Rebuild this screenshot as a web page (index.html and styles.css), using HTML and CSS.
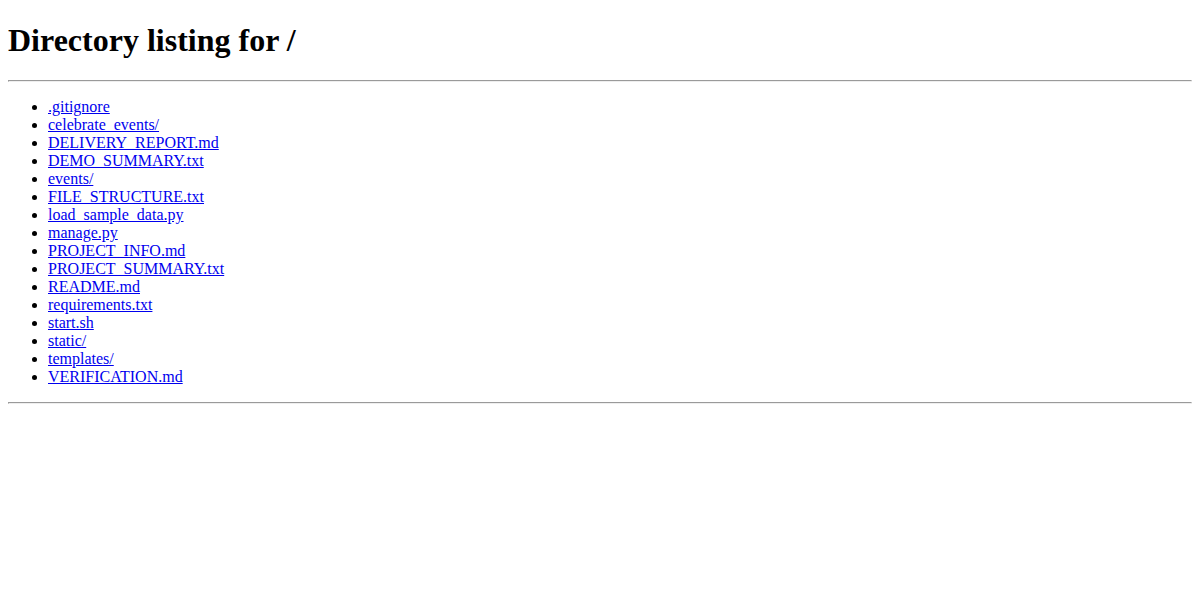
FILE: index.html
```html
<!DOCTYPE HTML>
<html lang="en">
<head>
<meta charset="utf-8">
<title>Directory listing for /</title>
<link rel="stylesheet" href="styles.css">
</head>
<body>
<h1>Directory listing for /</h1>
<hr>
<ul>
<li><a href=".gitignore">.gitignore</a></li>
<li><a href="celebrate_events/">celebrate_events/</a></li>
<li><a href="DELIVERY_REPORT.md">DELIVERY_REPORT.md</a></li>
<li><a href="DEMO_SUMMARY.txt">DEMO_SUMMARY.txt</a></li>
<li><a href="events/">events/</a></li>
<li><a href="FILE_STRUCTURE.txt">FILE_STRUCTURE.txt</a></li>
<li><a href="load_sample_data.py">load_sample_data.py</a></li>
<li><a href="manage.py">manage.py</a></li>
<li><a href="PROJECT_INFO.md">PROJECT_INFO.md</a></li>
<li><a href="PROJECT_SUMMARY.txt">PROJECT_SUMMARY.txt</a></li>
<li><a href="README.md">README.md</a></li>
<li><a href="requirements.txt">requirements.txt</a></li>
<li><a href="start.sh">start.sh</a></li>
<li><a href="static/">static/</a></li>
<li><a href="templates/">templates/</a></li>
<li><a href="VERIFICATION.md">VERIFICATION.md</a></li>
</ul>
<hr>
</body>
</html>
```

FILE: styles.css
```css
body {
    font-family: "Liberation Serif", "Times New Roman", serif;
    background-color: #fff;
    color: #000;
}

h1 {
    margin-top: 14px;
}

a {
    color: #0000ee;
}
```
